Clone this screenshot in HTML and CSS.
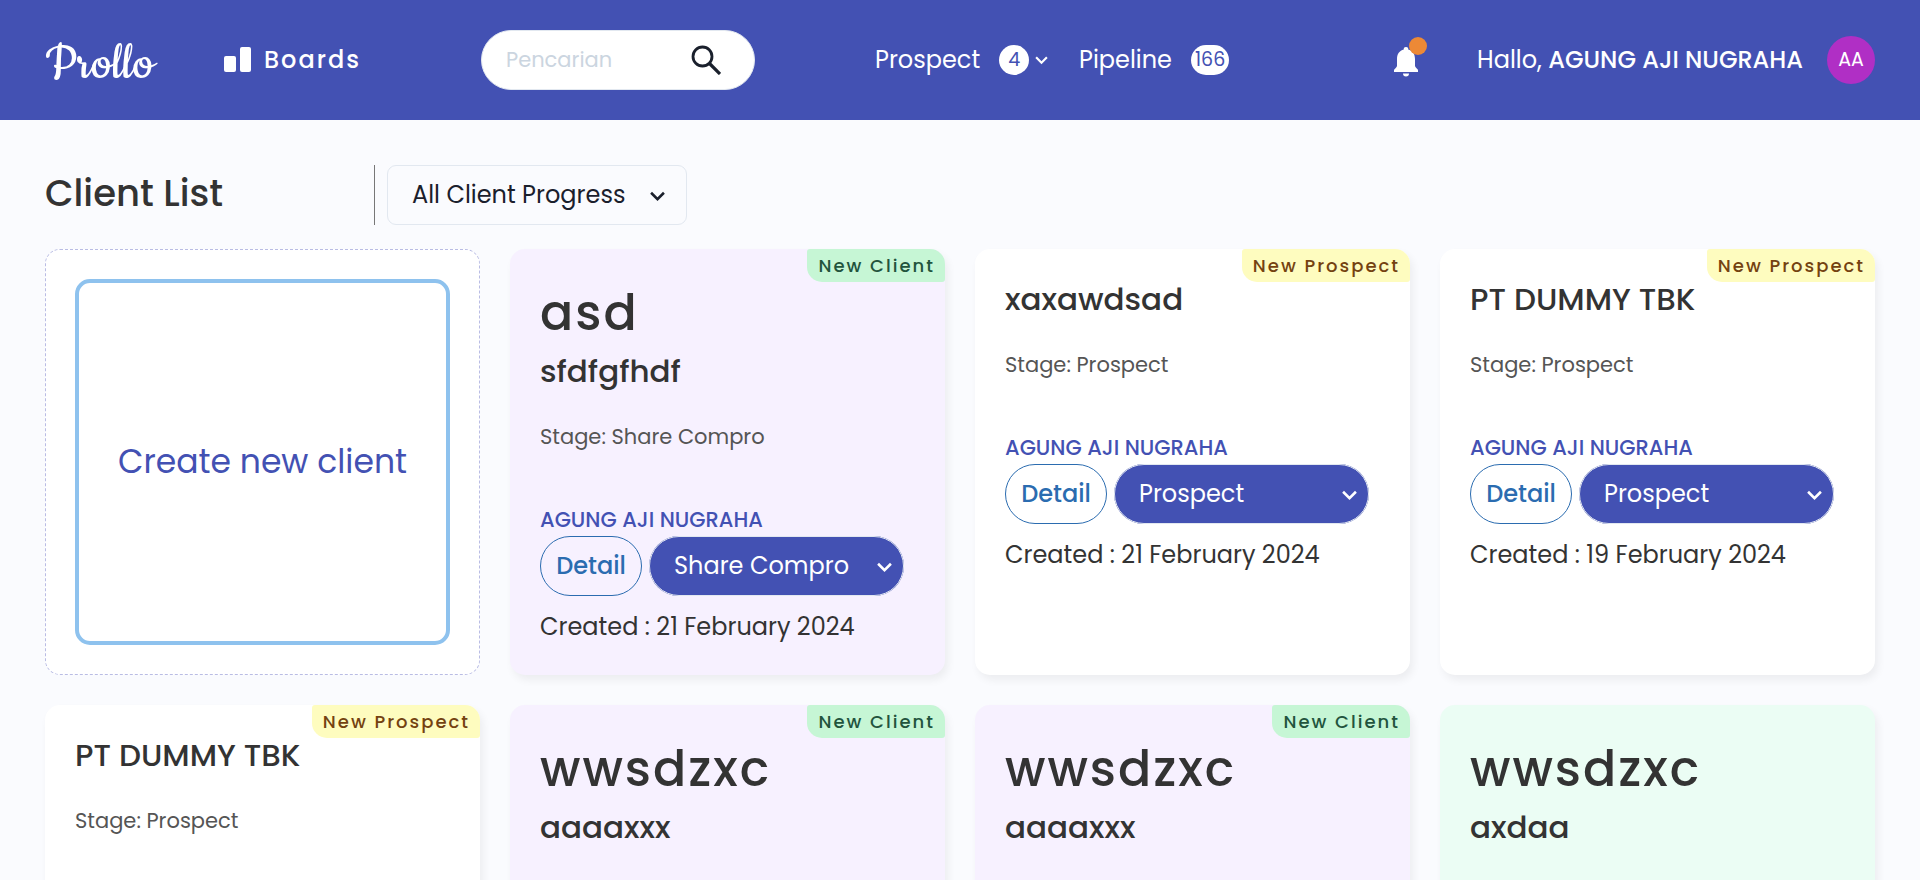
FILE: index.html
```html
<!DOCTYPE html>
<html lang="id">
<head>
<meta charset="utf-8">
<title>Prollo - Client List</title>
<link rel="stylesheet" href="styles.css">
</head>
<body>
<svg class="sprite" aria-hidden="true">
  <symbol id="chevron" viewBox="0 0 14 10"><path d="M1 1.500 7 7.500 13 1.500" fill="none" stroke="currentColor" stroke-width="2.4"/></symbol>
</svg>
<header class="topbar">
  <a class="logo" href="#">Prollo</a>
  <a class="boards" href="#">
    <svg width="27" height="26" viewBox="0 0 27 26" fill="currentColor" aria-hidden="true"><rect x="0" y="9" width="12" height="16" rx="2"/><rect x="16" y="0" width="11" height="25" rx="2"/></svg>
    <span>Boards</span>
  </a>
  <form class="search">
    <input class="search-input" type="text" placeholder="Pencarian" aria-label="Pencarian">
    <button class="search-button" type="button" aria-label="Cari">
      <svg width="30" height="30" viewBox="0 0 30 30" fill="none" stroke="currentColor" stroke-width="2.8" aria-hidden="true"><circle cx="11.500" cy="11.500" r="9.500"/><path d="M18.500 18.500 29 29" stroke-width="3.2"/></svg>
    </button>
  </form>
  <a class="nav-link" href="#"><span class="nav-label">Prospect</span><span class="count">4</span><svg class="nav-chevron" aria-hidden="true"><use href="#chevron"/></svg></a>
  <a class="nav-link" href="#"><span class="nav-label">Pipeline</span><span class="count">166</span></a>
  <button class="bell" type="button" aria-label="Notifikasi">
    <svg width="24" height="30" viewBox="0 0 24 30" fill="currentColor" aria-hidden="true"><path d="M12 0a2.200 2.200 0 0 1 2.200 2.600C18.500 3.600 21 7.300 21 12v7c0 1.400 3 3 3 4v2H0v-2c0-1 3-2.600 3-4v-7c0-4.700 2.500-8.400 6.800-9.400A2.200 2.200 0 0 1 12 0zM9 26.500h6a3 3 0 0 1-6 0z"/></svg>
    <span class="bell-dot"></span>
  </button>
  <p class="greeting">Hallo, <strong class="user">AGUNG AJI NUGRAHA</strong></p>
  <button class="avatar" type="button">AA</button>
</header>

<main class="page">
  <div class="toolbar">
    <h1 class="page-title">Client List</h1>
    <div class="select filter">
      <select class="select-box" aria-label="Client progress"><option>All Client Progress</option></select>
      <svg class="select-chevron" aria-hidden="true"><use href="#chevron"/></svg>
    </div>
  </div>

  <section class="grid">
    <div class="card card-create"><button class="create" type="button">Create new client</button></div>

    <article class="card card-lavender">
      <span class="badge badge-client">New Client</span>
      <h2 class="title">asd</h2>
      <h3 class="name">sfdfgfhdf</h3>
      <p class="stage">Stage: Share Compro</p>
      <p class="owner">AGUNG AJI NUGRAHA</p>
      <div class="actions">
        <button class="detail" type="button">Detail</button>
        <div class="select progress">
          <select class="select-box" aria-label="Stage"><option>Share Compro</option></select>
          <svg class="select-chevron" aria-hidden="true"><use href="#chevron"/></svg>
        </div>
      </div>
      <p class="created">Created : 21 February 2024</p>
    </article>

    <article class="card">
      <span class="badge badge-prospect">New Prospect</span>
      <h3 class="name">xaxawdsad</h3>
      <p class="stage">Stage: Prospect</p>
      <p class="owner">AGUNG AJI NUGRAHA</p>
      <div class="actions">
        <button class="detail" type="button">Detail</button>
        <div class="select progress">
          <select class="select-box" aria-label="Stage"><option>Prospect</option></select>
          <svg class="select-chevron" aria-hidden="true"><use href="#chevron"/></svg>
        </div>
      </div>
      <p class="created">Created : 21 February 2024</p>
    </article>

    <article class="card">
      <span class="badge badge-prospect">New Prospect</span>
      <h3 class="name">PT DUMMY TBK</h3>
      <p class="stage">Stage: Prospect</p>
      <p class="owner">AGUNG AJI NUGRAHA</p>
      <div class="actions">
        <button class="detail" type="button">Detail</button>
        <div class="select progress">
          <select class="select-box" aria-label="Stage"><option>Prospect</option></select>
          <svg class="select-chevron" aria-hidden="true"><use href="#chevron"/></svg>
        </div>
      </div>
      <p class="created">Created : 19 February 2024</p>
    </article>

    <article class="card">
      <span class="badge badge-prospect">New Prospect</span>
      <h3 class="name">PT DUMMY TBK</h3>
      <p class="stage">Stage: Prospect</p>
    </article>

    <article class="card card-lavender">
      <span class="badge badge-client">New Client</span>
      <h2 class="title">wwsdzxc</h2>
      <h3 class="name">aaaaxxx</h3>
    </article>

    <article class="card card-lavender">
      <span class="badge badge-client">New Client</span>
      <h2 class="title">wwsdzxc</h2>
      <h3 class="name">aaaaxxx</h3>
    </article>

    <article class="card card-mint">
      <h2 class="title">wwsdzxc</h2>
      <h3 class="name">axdaa</h3>
    </article>
  </section>
</main>
</body>
</html>
```
FILE: styles.css
```css
* { box-sizing: border-box; }

body {
  margin: 0;
  height: 100vh;
  overflow: hidden;
  background: #fafbfe;
  color: #333;
  font-family: Poppins, Inter, "Open Sans", sans-serif;
  font-size: 24px;
  line-height: 36px;
}

h1, h2, h3, p { margin: 0; font-weight: 500; }
button, input, select { font: inherit; color: inherit; margin: 0; }
button { cursor: pointer; padding: 0; border: 0; background: none; }
a { color: inherit; text-decoration: none; }
.sprite { display: none; }

/* Top bar */
.topbar {
  display: grid;
  grid-template-columns: 179px 257px 394px 204px 1fr auto auto auto;
  align-items: center;
  min-height: 120px;
  padding: 0 45px;
  background: #4351b3;
  color: #fff;
}
.logo {
  padding-top: 10px;
  font-family: Cookie, Satisfy, "Dancing Script", "Liberation Serif", serif;
  font-size: 58px;
  line-height: 60px;
}
.boards { display: flex; align-items: center; gap: 13px; font-weight: 500; letter-spacing: 2px; }
.search {
  display: flex;
  align-items: center;
  width: 274px;
  height: 60px;
  padding: 0 33px 0 24px;
  border: 1px solid #e2e8f0;
  border-radius: 30px;
  background: #fff;
  color: #1a202c;
}
.search-input { flex: 1; min-width: 0; padding: 0; border: 0; outline: 0; background: none; font-size: 21px; }
.search-input::placeholder { color: #cbd5e0; opacity: 1; }
.search-button { display: flex; }
.nav-link { display: flex; align-items: center; }
.nav-label { min-width: 105px; margin-right: 19px; }
.nav-link + .nav-link .nav-label { min-width: 93px; }
.count {
  min-width: 30px;
  padding: 0 4px;
  border-radius: 15px;
  background: #fff;
  color: #4351b3;
  font-size: 19px;
  line-height: 30px;
  text-align: center;
}
.nav-chevron { width: 13px; height: 9px; margin-left: 6px; }
.bell { position: relative; display: flex; margin: 4px 59px 0 0; }
.bell-dot {
  position: absolute;
  top: -10px;
  left: 15px;
  width: 18px;
  height: 18px;
  border-radius: 50%;
  background: #ed8936;
}
.user { font-weight: 500; }
.avatar {
  width: 48px;
  height: 48px;
  margin-left: 24px;
  border-radius: 50%;
  background: #b02fc5;
  font-size: 19px;
}

/* Page heading */
.page { padding: 45px; }
.toolbar { display: flex; align-items: center; gap: 12px; margin-bottom: 24px; }
.page-title {
  width: 330px;
  padding-bottom: 4px;
  border-right: 1px solid #777;
  font-size: 37px;
  line-height: 56px;
}

/* Drop-downs */
.select { position: relative; height: 60px; }
.select-box {
  width: 100%;
  height: 100%;
  padding: 0 48px 0 24px;
  border: 1px solid #e2e8f0;
  border-radius: inherit;
  background: transparent;
  appearance: none;
}
.select-chevron {
  position: absolute;
  top: 50%;
  right: 22px;
  width: 15px;
  height: 11px;
  margin-top: -4px;
  pointer-events: none;
}
.filter { width: 300px; border-radius: 9px; color: #1a202c; }
.progress { flex: 0 1 255px; border-radius: 30px; background: #4351b3; color: #fff; }
.progress .select-chevron { right: 12px; }

/* Cards */
.grid {
  display: grid;
  grid-template-columns: repeat(4, minmax(0, 1fr));
  grid-auto-rows: minmax(426px, auto);
  gap: 30px;
}
.card {
  position: relative;
  padding: 30px;
  border-radius: 15px;
  background: #fff;
  box-shadow: 3px 5px 9px rgba(0, 0, 0, 0.06);
}
.card-lavender { background: #f7f1ff; }
.card-mint { background: #ebfdf4; }
.card-create {
  display: flex;
  padding: 29px;
  border: 1px dashed #b9bce4;
  box-shadow: none;
}
.create {
  flex: 1;
  border: 4px solid #8ec2ee;
  border-radius: 15px;
  color: #4351b3;
  font-size: 33px;
}
.badge {
  position: absolute;
  top: 0;
  right: 0;
  padding: 0 10px 0 11px;
  border-radius: 3px 15px;
  font-size: 18px;
  font-weight: 500;
  line-height: 33px;
  letter-spacing: 2px;
}
.badge-client { background: #c6f6d5; color: #22543d; }
.badge-prospect { background: #fefcbf; color: #744210; }
.title { margin-bottom: 4px; font-size: 49px; line-height: 68px; letter-spacing: 2px; }
.name { margin-bottom: 30px; font-size: 31px; line-height: 40px; }
.stage { margin-bottom: 50px; color: #555; font-size: 21px; font-weight: 400; line-height: 32px; }
.owner { color: #4351b3; font-size: 21px; line-height: 33px; }
.actions { display: flex; gap: 7px; margin-bottom: 13px; }
.detail {
  width: 102px;
  height: 60px;
  border: 1px solid #2b6cb0;
  border-radius: 30px;
  color: #2b6cb0;
  font-weight: 500;
}
.created, .greeting { font-weight: 400; }
```
